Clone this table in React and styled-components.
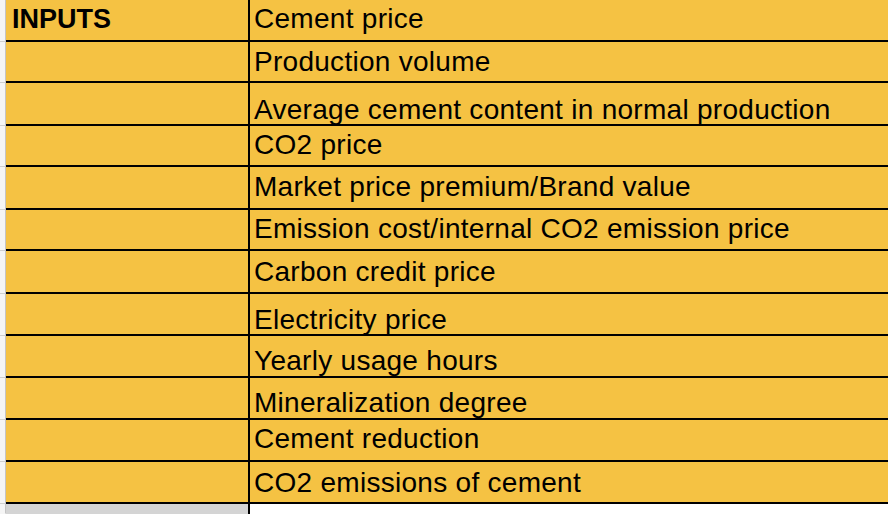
import React from 'react';
import styled, { createGlobalStyle } from 'styled-components';

const GlobalStyle = createGlobalStyle`
  *, *::before, *::after {
    box-sizing: border-box;
  }
  html, body {
    margin: 0;
    padding: 0;
    background: #ffffff;
  }
  body {
    font-family: "Liberation Sans", Arial, sans-serif;
  }
`;

const Sheet = styled.div`
  display: flex;
  flex-direction: column;
  width: 888px;
  height: 514px;
  overflow: hidden;
`;

const Row = styled.div`
  display: grid;
  grid-template-columns: 6px 244px 1fr;
  grid-template-rows: 100%;
  height: ${(p) => p.$h}px;
  flex-shrink: 0;
`;

const Gutter = styled.div`
  background: #f5f5f5;
  border-right: 1px solid #c4c4c4;
  border-bottom: 1px solid ${(p) => (p.$last ? 'transparent' : '#cfcfcf')};
`;

const Cell = styled.div`
  height: 100%;
  background: ${(p) => p.$bg || '#f5c243'};
  border-bottom: ${(p) => (p.$filler ? 'none' : '2px solid #000')};
  font-size: 28px;
  line-height: 28px;
  letter-spacing: 0.28px;
  color: #000;
  white-space: nowrap;
  padding-top: ${(p) => p.$pad || 0}px;
`;

const LabelCell = styled(Cell)`
  border-right: 2px solid #000;
  padding-left: 6px;
  font-size: 27px;
  letter-spacing: 0;
  font-weight: 700;
`;

const ValueCell = styled(Cell)`
  padding-left: 4px;
`;

const rows = [
  { h: 42, pad: 5, text: 'Cement price', label: 'INPUTS' },
  { h: 41, pad: 6, text: 'Production volume' },
  { h: 43, pad: 13, text: 'Average cement content in normal production' },
  { h: 41, pad: 5, text: 'CO2 price' },
  { h: 43, pad: 6, text: 'Market price premium/Brand value' },
  { h: 41, pad: 5, text: 'Emission cost/internal CO2 emission price' },
  { h: 43, pad: 7, text: 'Carbon credit price' },
  { h: 42, pad: 12, text: 'Electricity price' },
  { h: 42, pad: 11, text: 'Yearly usage hours' },
  { h: 42, pad: 11, text: 'Mineralization degree' },
  { h: 42, pad: 5, text: 'Cement reduction' },
  { h: 42, pad: 7, text: 'CO2 emissions of cement' },
];

export default function App() {
  return (
    <>
      <GlobalStyle />
      <Sheet>
        {rows.map((r) => (
          <Row key={r.text} $h={r.h}>
            <Gutter />
            <LabelCell $pad={r.label ? 5 : 0}>{r.label}</LabelCell>
            <ValueCell $pad={r.pad}>{r.text}</ValueCell>
          </Row>
        ))}
        <Row $h={10}>
          <Gutter $last />
          <LabelCell $bg="#d4d4d4" $filler />
          <ValueCell $bg="#ffffff" $filler />
        </Row>
      </Sheet>
    </>
  );
}
